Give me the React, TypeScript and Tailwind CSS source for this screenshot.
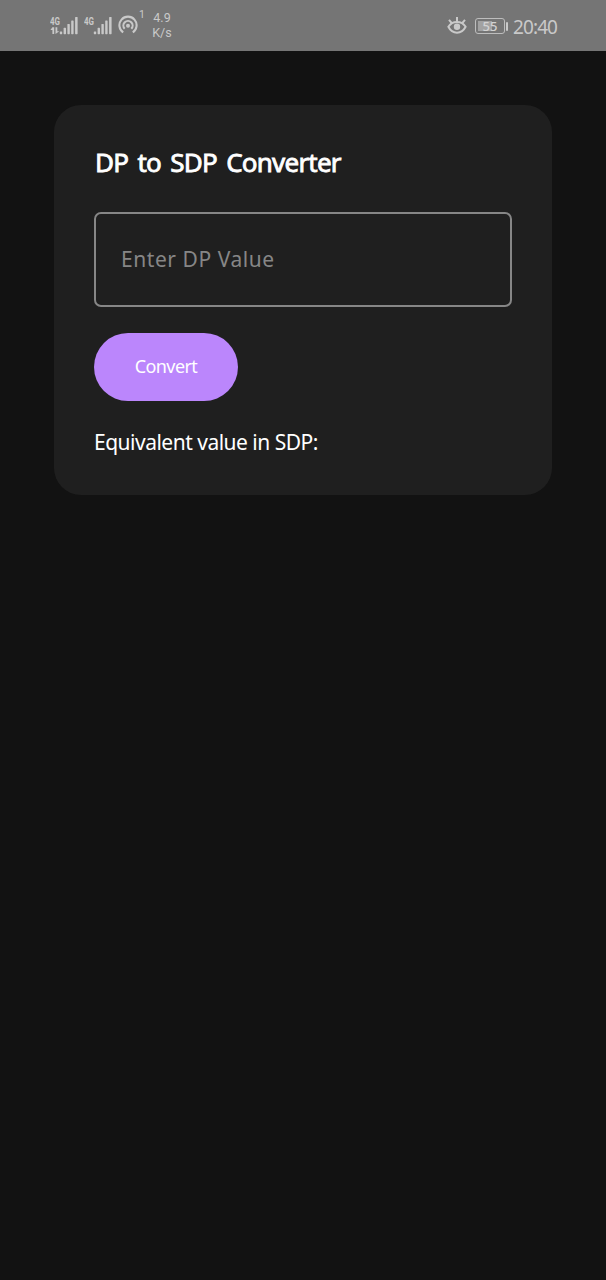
import { useState } from "react";

function Signal({ data = false }: { data?: boolean }) {
  return (
    <svg width="29" height="20" viewBox="0 0 29 20" fill="#c9c9c9" className="shrink-0">
      <text x="0" y="8.5" fontSize="11" fontWeight="700" textLength="10" lengthAdjust="spacingAndGlyphs" fontFamily="Roboto, sans-serif">
        4G
      </text>
      {data && <path d="M2.4 11.2h1.8V18H2.4v-4H.4zM5.5 11.2h1.8v4h2L5.5 18z" />}
      <rect x="9.8" y="15.5" width="2.4" height="2.7" rx=".6" />
      <rect x="13.6" y="11.8" width="2.4" height="6.4" rx=".6" />
      <rect x="17.4" y="8" width="2.4" height="10.2" rx=".6" />
      <rect x="21.2" y="4.4" width="2.4" height="13.8" rx=".6" />
      <rect x="25.1" y="1" width="2.5" height="17.2" rx=".6" />
    </svg>
  );
}

function Hotspot() {
  return (
    <svg width="20" height="20" viewBox="0 0 20 20" fill="none" stroke="#c9c9c9" strokeWidth="2.1" className="shrink-0">
      <path d="M5.2 17.4A8.6 8.6 0 1 1 14.8 17.4" />
      <path d="M6.7 13.8A4.6 4.6 0 1 1 13.3 13.8" />
      <circle cx="10" cy="10.7" r="2" fill="#c9c9c9" stroke="none" />
    </svg>
  );
}

function Eye() {
  return (
    <svg width="20" height="18" viewBox="0 0 20 18" fill="none" stroke="#c9c9c9" strokeWidth="2" className="shrink-0">
      <path d="M1.4 10.8C5.3 4.4 14.7 4.4 18.6 10.8C14.7 18.6 5.3 18.6 1.4 10.8Z" />
      <path d="M10 1v5M2 3.8l2.8 3.3M18 3.8l-2.8 3.3" />
      <circle cx="10" cy="10.8" r="3.2" fill="#c9c9c9" stroke="none" />
    </svg>
  );
}

function Battery() {
  return (
    <div className="flex shrink-0 items-center gap-px">
      <div className="relative flex h-4 w-[30px] items-center justify-center rounded-[3px] border border-[#bdbdbd]">
        <div className="absolute top-[2px] bottom-[2px] left-[2px] w-[14px] bg-[#a2a2a2]" />
        <span className="relative text-[13px] leading-none font-medium text-[#d2d2d2]">55</span>
      </div>
      <div className="h-[9px] w-[2px] rounded-sm bg-[#c9c9c9]" />
    </div>
  );
}

function StatusBar() {
  return (
    <header className="flex h-[51px] items-start justify-between bg-[#757575] pr-[49px] pl-[50px] text-[#c9c9c9]">
      <div className="flex items-start">
        <div className="mt-4 flex gap-[5px]">
          <Signal data />
          <Signal />
        </div>
        <div className="mt-[15px] ml-[5px]">
          <Hotspot />
        </div>
        <span className="mt-[9px] ml-px w-[6px] font-[Roboto,sans-serif] text-[10.5px] leading-[11px]">1</span>
        <div className="mt-[10px] ml-[7px] w-5 text-center font-[Roboto,sans-serif] text-[12.5px] leading-[15px] whitespace-nowrap">
          <div>4.9</div>
          <div>K/s</div>
        </div>
      </div>
      <div className="flex items-start">
        <div className="mt-4">
          <Eye />
        </div>
        <div className="mt-[18px] ml-[8px]">
          <Battery />
        </div>
        <span className="mt-[15px] ml-[5px] w-11 text-[19px] leading-6 tracking-[-0.9px] whitespace-nowrap">20:40</span>
      </div>
    </header>
  );
}

export default function App() {
  const [value, setValue] = useState("");
  const [result, setResult] = useState("");

  return (
    <div className="min-h-[1280px] bg-[#121212] font-['Noto_Sans',sans-serif]">
      <StatusBar />
      <main className="px-[54px] pt-[54px]">
        <section className="h-[390px] rounded-[27px] bg-[#1f1f1f] px-10 pt-[39px]">
          <h1 className="h-9 pl-px text-[26px] leading-9 font-normal tracking-[-0.78px] whitespace-nowrap text-white [-webkit-text-stroke:0.8px_white] [word-spacing:3.3px]">
            DP to SDP Converter
          </h1>
          <input
            value={value}
            onChange={(e) => setValue(e.target.value)}
            placeholder="Enter DP Value"
            className="mt-8 block h-[95px] w-full rounded-[7px] border-2 border-[#868686] bg-transparent px-[25px] pb-px text-[21px] tracking-[0.55px] text-white outline-none placeholder:text-[#868686]"
          />
          <button
            onClick={() => setResult(value)}
            className="mt-[26px] flex h-[68px] w-[144px] items-center justify-center rounded-full bg-[#bb86fc] pb-[2px] text-[18px] tracking-[-0.6px] text-white"
          >
            Convert
          </button>
          <p className="mt-[26px] text-[21px] leading-[30px] tracking-[-0.5px] whitespace-nowrap text-white">
            Equivalent value in SDP:{result && ` ${result}`}
          </p>
        </section>
      </main>
    </div>
  );
}
